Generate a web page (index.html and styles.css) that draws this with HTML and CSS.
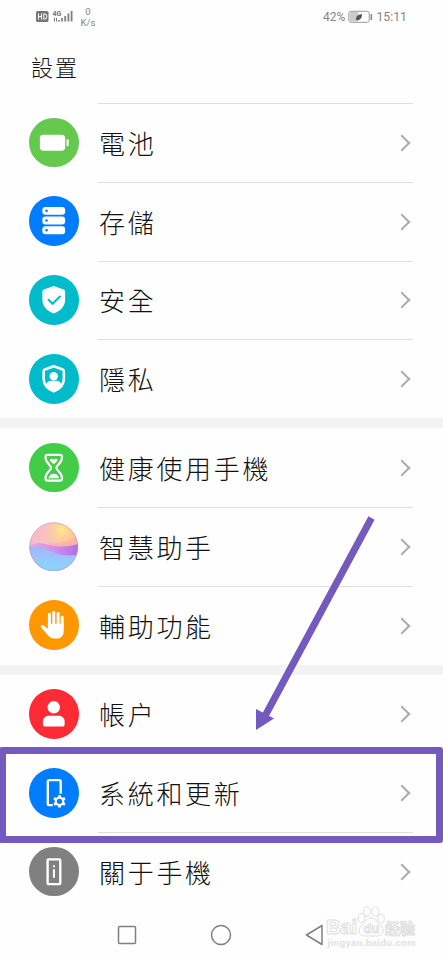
FILE: index.html
```
<!DOCTYPE html>
<html lang="zh-Hant">
<head>
<meta charset="utf-8">
<title>設置</title>
<link rel="stylesheet" href="styles.css">
</head>
<body>
<main class="phone">
  <header class="status">
    <svg class="signal" width="40" height="16" viewBox="0 0 40 16">
      <rect x="1" y="3" width="12.500" height="11" rx="1.500" fill="#777"/>
      <path d="M3.500 5.500v6M6.500 5.500v6M3.500 8.500h3M8.800 5.500v6M8.800 6h1q2 0 2 2.500t-2 2.500h-1" fill="none" stroke="#fff" stroke-width="1"/>
      <path d="M27 13.500V10M30.200 13.500V8M33.400 13.500V5.500M36.600 13.500V3M24 13.500V12" stroke="#808080" stroke-width="1.800" fill="none"/>
      <path d="M19.500 9.800v3.700M21.500 9.800v3.700" stroke="#777" stroke-width="1"/>
      <text x="17.500" y="8" class="net">4G</text>
    </svg>
    <div class="rate"><span>0</span><span>K/s</span></div>
    <div class="right">
      <span>42%</span>
      <svg width="25" height="14" viewBox="0 0 25 14">
        <rect x=".8" y="1.300" width="20.400" height="11" rx="2" fill="#fff" stroke="#999" stroke-width="1"/>
        <rect x="1.500" y="2" width="9" height="9.600" fill="#ccc"/>
        <path d="M8 10q-1-5 6-6 0 7-6 6z" fill="#555"/>
        <path d="M23.300 4v6" stroke="#888" stroke-width="1.600"/>
      </svg>
      <span>15:11</span>
    </div>
  </header>
  <h1 class="title">設置</h1>

  <section class="group">
    <div class="row"><span class="icon green"><svg viewBox="0 0 50 50"><rect x="11" y="17" width="25.500" height="16" rx="3.500" fill="#fff"/><path d="M39 22.500v5" stroke="#fff" stroke-width="2.200" stroke-linecap="round"/></svg></span><div class="cell"><span>電池</span><i class="chev"></i></div></div>
    <div class="row"><span class="icon blue"><svg viewBox="0 0 50 50"><g fill="#fff"><rect x="13.500" y="11" width="23" height="8" rx="3"/><rect x="13.500" y="20.800" width="23" height="8" rx="3"/><rect x="13.500" y="30.600" width="23" height="8" rx="3"/></g><g fill="#007dff"><circle cx="17.700" cy="15" r="1.300"/><circle cx="17.700" cy="24.800" r="1.300"/><circle cx="17.700" cy="34.600" r="1.300"/></g></svg></span><div class="cell"><span>存儲</span><i class="chev"></i></div></div>
    <div class="row"><span class="icon teal"><svg viewBox="0 0 50 50"><path d="M25 11l10 3.600q1.500.5 1.500 2.200v8.200c0 7-5 11.500-11.500 14-6.500-2.500-11.500-7-11.500-14v-8.200q0-1.700 1.500-2.200z" fill="#fff"/><path d="M19.200 24.500l4.600 4.600 8-8" fill="none" stroke="#00bbc9" stroke-width="2"/></svg></span><div class="cell"><span>安全</span><i class="chev"></i></div></div>
    <div class="row"><span class="icon teal"><svg viewBox="0 0 50 50"><path d="M25 12.300l9 3.300q1.200.4 1.200 1.800v7.600c0 6.500-4 10.300-10.200 12.800-6.200-2.500-10.200-6.300-10.200-12.800v-7.600q0-1.400 1.200-1.800z" fill="none" stroke="#fff" stroke-width="2.600"/><circle cx="25" cy="22.500" r="4.200" fill="#fff"/><path d="M16.800 31q2-4 5.500-4h5.400q3.500 0 5.500 4-2.500 4-8.200 6.500-5.700-2.500-8.200-6.500z" fill="#fff"/></svg></span><div class="cell"><span>隱私</span><i class="chev"></i></div></div>
  </section>

  <section class="group">
    <div class="row"><span class="icon grass"><svg viewBox="0 0 50 50"><path d="M19 12h12q2.400 0 2.400 2.300c0 6.200-5.700 7.700-5.700 10.700s5.700 5 5.700 10.500q0 2.500-2.400 2.500H19q-2.400 0-2.400-2.500c0-5.500 5.700-7.500 5.700-10.500s-5.700-4.500-5.700-10.700Q16.600 12 19 12z" fill="none" stroke="#fff" stroke-width="2.200"/><path d="M25 21.500l-3.600-3.200q-.8-2.300 1.200-2.300 1.600 0 2.400 1 .8-1 2.400-1 2 0 1.200 2.300zM19.500 35.500q2-4.500 5.500-4.500t5.500 4.500z" fill="#fff"/></svg></span><div class="cell"><span>健康使用手機</span><i class="chev"></i></div></div>
    <div class="row"><span class="icon"><svg viewBox="0 0 50 50">
      <defs>
        <linearGradient id="sky" x1="0" y1="0" x2="1" y2=".5"><stop offset="0" stop-color="#f5b6cf"/><stop offset=".5" stop-color="#fac5b9"/><stop offset="1" stop-color="#ffc38a"/></linearGradient>
        <linearGradient id="band" x1="0" x2="1"><stop offset="0" stop-color="#f0a8d0"/><stop offset=".5" stop-color="#d28fee"/><stop offset="1" stop-color="#b36be8"/></linearGradient>
        <linearGradient id="sea" x1="0" y1="0" x2="0" y2="1"><stop offset="0" stop-color="#a3b4fb"/><stop offset="1" stop-color="#90d9ff"/></linearGradient>
        <radialGradient id="sun"><stop offset="0" stop-color="#ffe989"/><stop offset="1" stop-color="#ffd38a" stop-opacity="0"/></radialGradient>
        <clipPath id="ball"><circle cx="25" cy="25" r="24.500"/></clipPath>
      </defs>
      <g clip-path="url(#ball)"><path fill="url(#sky)" d="M0 0h50v50H0z"/><circle cx="33" cy="8" r="16" fill="url(#sun)"/><path d="M20 21q14 2 30-7v14H20z" fill="#ffa1ae" opacity=".5"/><path d="M0 24q9-5 19-1 16 4 31-1v30H0z" fill="url(#band)"/><path d="M0 25q11-2 21 4 14 7 29 4v18H0z" fill="url(#sea)"/><path d="M0 43q15-8 27-4 11 3 20-3v15H0z" fill="#8bcfff" opacity=".6"/></g><circle cx="25" cy="25" r="24.300" fill="none" stroke="#b996b5" stroke-opacity=".65" stroke-width=".8"/>
    </svg></span><div class="cell"><span>智慧助手</span><i class="chev"></i></div></div>
    <div class="row"><span class="icon orange"><svg viewBox="0 0 50 50"><path d="M20.600 27V14.500M25 26V12.500M29.400 26V13.500M33.500 28V17.500" stroke="#fff" stroke-width="3" stroke-linecap="round"/><path d="M19.100 24H35v7.500c0 5-3 7.500-7.800 7.500-4.200 0-6.500-1.300-8.500-4l-6.500-7.300c-1.100-1.500.8-3 2.500-2l4.400 3.300z" fill="#fff"/></svg></span><div class="cell"><span>輔助功能</span><i class="chev"></i></div></div>
  </section>

  <section class="group">
    <div class="row"><span class="icon red"><svg viewBox="0 0 50 50"><g fill="#fff"><circle cx="25" cy="18.500" r="6.300"/><path d="M14 35v-2c0-4 3-6 6.500-6h9c3.500 0 6.500 2 6.500 6v2q0 3-2 3H16q-2 0-2-3z"/></g></svg></span><div class="cell"><span>帳户</span><i class="chev"></i></div></div>
    <div class="row marked"><span class="icon blue"><svg viewBox="0 0 50 50"><path d="M24 37.500h-3.500q-1.500 0-1.500-1.500V13.800q0-1.500 1.500-1.500h10q1.500 0 1.500 1.500V26" fill="none" stroke="#fff" stroke-width="2.400"/><circle cx="30.800" cy="33.700" r="6" fill="#007dff"/><path d="M30.800 27.400v12.600M25.300 30.550l11 6.300M25.300 36.850l11-6.300" stroke="#fff" stroke-width="2.800"/><circle cx="30.800" cy="33.700" r="3.800" fill="#007dff" stroke="#fff" stroke-width="2.200"/></svg></span><div class="cell"><span>系統和更新</span><i class="chev"></i></div></div>
    <div class="row"><span class="icon gray"><svg viewBox="0 0 50 50"><rect x="18.800" y="12.500" width="12.800" height="25" rx="1" fill="none" stroke="#fff" stroke-width="2.400"/><path d="M25.200 18.500v2M25.200 22.500v8.500" stroke="#fff" stroke-width="2"/></svg></span><div class="cell"><span>關于手機</span><i class="chev"></i></div></div>
  </section>

  <nav class="nav">
    <svg width="20" height="22" viewBox="0 0 20 22"><rect x="1.500" y="2.500" width="17" height="17" rx="1"/></svg>
    <svg width="22" height="22" viewBox="0 0 22 22"><circle cx="11" cy="11" r="9.500"/></svg>
    <svg width="20" height="22" viewBox="0 0 20 22"><path d="M17 1.500v19L1.500 11z"/></svg>
  </nav>

  <svg class="arrow" width="130" height="220" viewBox="0 0 130 220"><path d="M121.500 3L15 201" stroke="#7459be" stroke-width="7" fill="none"/><path d="M6 194v21l18-11.500z" fill="#7459be"/></svg>
  <svg class="watermark" width="94" height="46" viewBox="0 0 94 46">
    <g fill="#fff" stroke="#ddd" stroke-width="1">
      <ellipse cx="36.500" cy="15" rx="3.300" ry="4.500"/><ellipse cx="42" cy="8.500" rx="3.500" ry="4.800"/><ellipse cx="50.500" cy="8.500" rx="3.500" ry="4.800"/><ellipse cx="56" cy="15.500" rx="3.300" ry="4.500"/>
      <path d="M46 15c5 0 6 5 9 7 5 4 4 11-3 11H40c-7 0-8-7-3-11 3-2 4-7 9-7z"/>
      <text x="1" y="31" class="brand">Bai</text><text x="38.500" y="30" class="du">du</text>
      <text x="60" y="31" class="exp">经验</text>
    </g>
    <text x="2.500" y="43" class="url" textLength="88">jingyan.baidu.com</text>
  </svg>
</main>
</body>
</html>
```
FILE: styles.css
```
* { box-sizing: border-box; }
body { margin: 0; background: #fefefe; }
.phone {
  position: relative;
  width: 443px;
  height: 960px;
  overflow: hidden;
  background: #fefefe;
  color: #111;
  font-family: "Noto Sans CJK TC", sans-serif;
}
.status {
  display: flex;
  height: 34px;
  padding: 0 36px 0 35px;
  color: #858585;
  font-family: Roboto, "Noto Sans", sans-serif;
  font-size: 12px;
}
.signal { margin-top: 8px; }
.net { font: 700 7px Roboto, sans-serif; fill: #777; }
.rate {
  display: flex;
  flex-direction: column;
  align-items: center;
  width: 16px;
  margin: 6px 0 0 5px;
  font-size: 9.5px;
  line-height: 11px;
}
.right {
  display: flex;
  align-items: center;
  gap: 3px;
  height: 34px;
  margin-left: auto;
  white-space: nowrap;
}
.right span:last-child { font-size: 12.3px; }
.title {
  height: 69px;
  margin: 0;
  padding-left: 31px;
  font-size: 22px;
  font-weight: 300;
  line-height: 65px;
  letter-spacing: 2px;
}
.group + .group { border-top: 10px solid #f3f3f3; }
.row {
  display: flex;
  align-items: center;
  height: 78.8px;
  padding: 0 30px 0 29px;
}
.icon {
  flex: none;
  width: 49.5px;
  height: 49.5px;
  border-radius: 50%;
}
.icon svg { display: block; width: 49.5px; height: 49.5px; }
.green { background: #65c94d; }
.blue { background: #007dff; }
.teal { background: #00bbc9; }
.grass { background: #43cc47; }
.orange { background: #ff9800; }
.red { background: #fc2b35; }
.gray { background: #808080; }
.cell {
  display: flex;
  flex: 1;
  align-items: center;
  justify-content: space-between;
  height: 100%;
  margin-left: 19.5px;
  padding: 0 5px 0 1px;
  border-top: 1px solid #dedede;
  font-size: 26px;
  font-weight: 300;
  line-height: 40px;
  letter-spacing: 2.7px;
}
.group + .group .row:first-child .cell { border-top-color: transparent; }
.chev {
  width: 12px;
  height: 12px;
  border: solid #adadad;
  border-width: 2px 2px 0 0;
  transform: rotate(45deg);
}
.marked { position: relative; }
.marked::after {
  content: "";
  position: absolute;
  inset: -6px 0 -11px -1px;
  border: 7px solid #7459be;
  border-radius: 3px;
}
.nav {
  display: flex;
  align-items: center;
  justify-content: space-between;
  height: 49px;
  padding: 0 118px 0 117px;
}
.nav svg { fill: none; stroke: #808080; stroke-width: 1.5; stroke-linejoin: round; }
.arrow { position: absolute; left: 250px; top: 515px; }
.watermark { position: absolute; left: 325px; top: 903px; opacity: .95; }
.brand { font: 700 20px "Liberation Sans", sans-serif; }
.du { font: 700 13px "Liberation Sans", sans-serif; }
.exp { font: 700 15px "Noto Sans CJK SC", sans-serif; }
.url { font: 700 9.5px "Liberation Sans", sans-serif; fill: #e0e0e0; }
```
